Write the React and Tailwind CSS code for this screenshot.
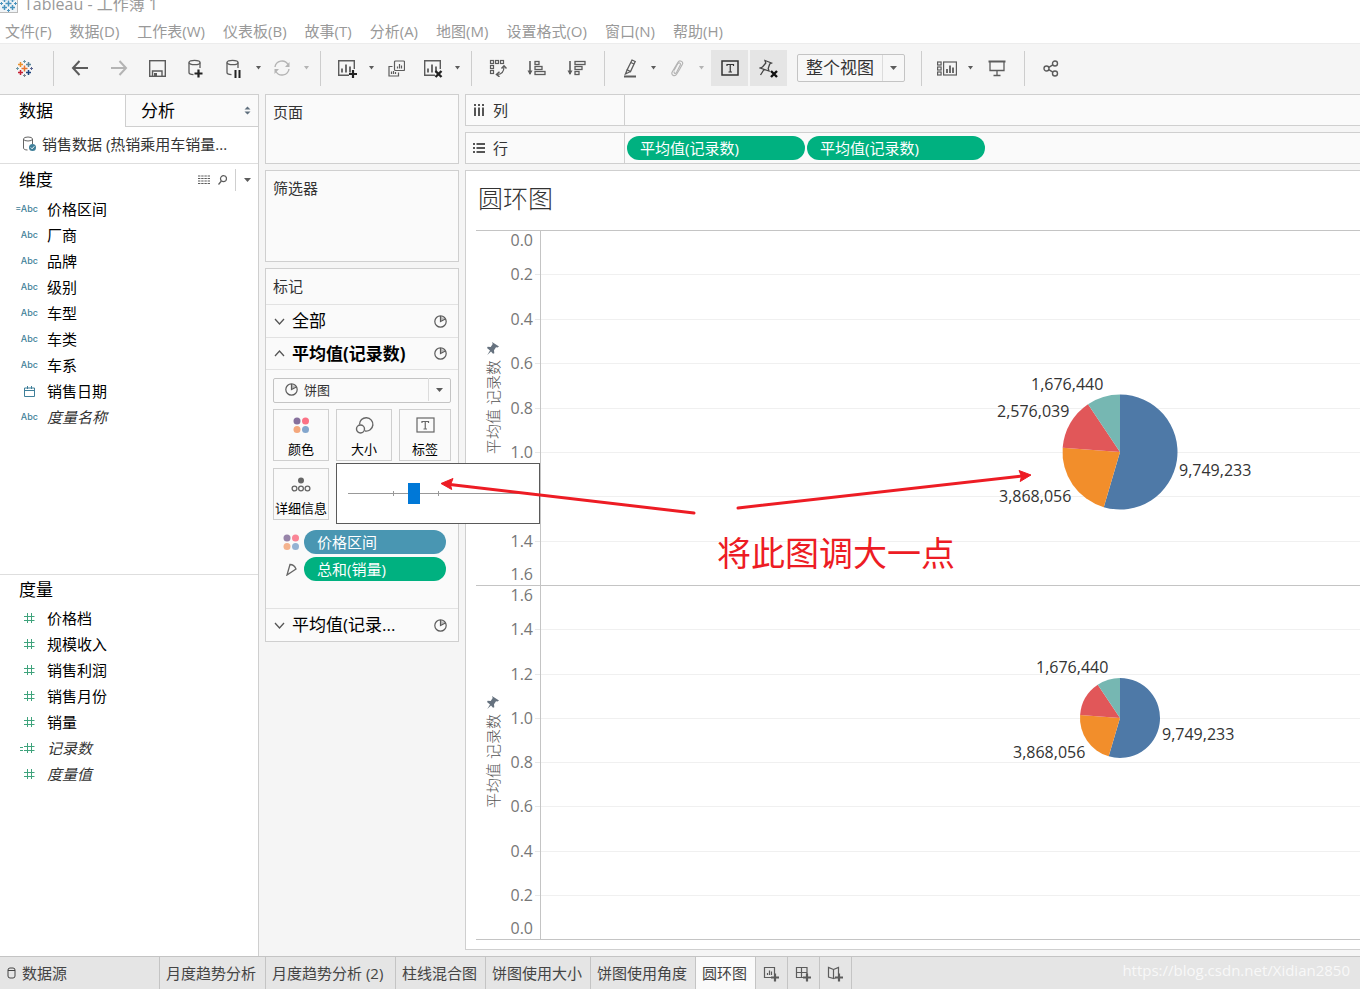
import React, { useState } from 'react';

const DIMENSIONS = [
  { name: '价格区间', type: 'calc' },
  { name: '厂商', type: 'text' },
  { name: '品牌', type: 'text' },
  { name: '级别', type: 'text' },
  { name: '车型', type: 'text' },
  { name: '车类', type: 'text' },
  { name: '车系', type: 'text' },
  { name: '销售日期', type: 'date' },
  { name: '度量名称', type: 'text', italic: true },
];

const MEASURES = [
  { name: '价格档', type: 'number' },
  { name: '规模收入', type: 'number' },
  { name: '销售利润', type: 'number' },
  { name: '销售月份', type: 'number' },
  { name: '销量', type: 'number' },
  { name: '记录数', type: 'calcNumber', italic: true },
  { name: '度量值', type: 'number', italic: true },
];

const MENUS = ['文件(F)', '数据(D)', '工作表(W)', '仪表板(B)', '故事(T)', '分析(A)', '地图(M)', '设置格式(O)', '窗口(N)', '帮助(H)'];

const SHEETS = [
  { name: '月度趋势分析', width: 'min-w-[106px]' },
  { name: '月度趋势分析 (2)', width: 'min-w-[130px]' },
  { name: '柱线混合图', width: 'min-w-[90px]' },
  { name: '饼图使用大小', width: 'min-w-[105px]' },
  { name: '饼图使用角度', width: 'min-w-[105px]' },
  { name: '圆环图', width: 'min-w-[60px]', active: true },
];

const SLICES = [
  { value: 9749233, color: '#4e79a7' },
  { value: 3868056, color: '#f28e2b' },
  { value: 2576039, color: '#e15759' },
  { value: 1676440, color: '#76b7b2' },
];

/* ---------- icons ---------- */

const Svg = ({ w = 18, h = 18, sw = 1, className = '', children }) => (
  <svg
    width={w}
    height={h}
    viewBox={`0 0 ${w} ${h}`}
    fill="none"
    stroke="currentColor"
    strokeWidth={sw}
    className={`block shrink-0 ${className}`}
    aria-hidden="true"
  >
    {children}
  </svg>
);

const plus = (x, y, r) => `M${x - r} ${y}h${r * 2}M${x} ${y - r}v${r * 2}`;

const LogoIcon = ({ mono }) => (
  <Svg w={17} h={17} sw={1.5}>
    <path d={plus(8.5, 8.5, 3)} stroke={mono || '#e8762d'} />
    <path d={plus(4.5, 4.5, 2.5)} stroke={mono || '#eb912c'} />
    <path d={plus(12.5, 4.5, 2.5)} stroke={mono || '#59879b'} />
    <path d={plus(4.5, 12.5, 2.5)} stroke={mono || '#c72035'} />
    <path d={plus(12.5, 12.5, 2.5)} stroke={mono || '#1f447e'} />
    <g strokeWidth="1">
      <path d={plus(8.5, 1.5, 1.5)} stroke={mono || '#7099a6'} />
      <path d={plus(8.5, 15.5, 1.5)} stroke={mono || '#7b848f'} />
      <path d={plus(1.5, 8.5, 1.5)} stroke={mono || '#7099a6'} />
      <path d={plus(15.5, 8.5, 1.5)} stroke={mono || '#5c6692'} />
    </g>
  </Svg>
);

const ArrowIcon = ({ flip }) => (
  <Svg w={18} h={16} sw={2} className={flip ? 'rotate-180' : ''}>
    <path d="M8.5 1L2 8l6.5 7M2 8h15" />
  </Svg>
);

const SaveIcon = () => (
  <Svg w={17} h={17} sw={1.4}>
    <rect x="0.7" y="0.7" width="15.6" height="15.6" />
    <path d="M3.5 16v-5h9.5v5" />
    <rect x="5" y="13" width="3" height="3" fill="currentColor" stroke="none" />
  </Svg>
);

const DbIcon = ({ pause }) => (
  <Svg w={18} h={19} sw={1.3}>
    <ellipse cx="7.5" cy="3.5" rx="5.5" ry="2.2" />
    <path d="M2 3.5v10c0 1.3 1.7 2 4.5 2.1M13 3.5V9" />
    {pause ? (
      <path d="M10.5 11v8M14.5 11v8" stroke="#222" strokeWidth="2" />
    ) : (
      <path d="M7.5 14.5h8M11.5 10.5v8" stroke="#222" strokeWidth="2.2" />
    )}
  </Svg>
);

const RefreshIcon = () => (
  <Svg w={18} h={18} sw={1.4}>
    <path d="M2 8a7 7 0 0 1 13-2.5M16 10a7 7 0 0 1-13 2.5" />
    <path d="M16.5 3v5h-4.5zM1.5 15v-5h4.5z" fill="currentColor" stroke="none" />
  </Svg>
);

const SheetIcon = ({ clear }) => (
  <Svg w={21} h={19} sw={1.4}>
    <path d="M12 16.3H1.7V1.7h15.6V10" />
    <path d="M5 13.5v-4M9 13.5v-8M13 13.5v-6" strokeWidth="1.8" />
    {clear ? (
      <path d="M12.5 12l6 6M18.5 12l-6 6" stroke="#222" strokeWidth="2.4" />
    ) : (
      <path d="M12 15h8M16 11v8" stroke="#222" strokeWidth="2.2" />
    )}
  </Svg>
);

const DuplicateIcon = () => (
  <Svg w={17} h={17} sw={1.2}>
    <rect x="6.5" y="1" width="10" height="9.5" rx="1" />
    <path d="M4.5 6.5h-3.5v9.5h9.5v-3.5" />
    <path d="M9.5 8.5v-2M11.5 8.5v-4.5M13.5 8.5v-3M3.5 14v-2.5M5.5 14v-3M7.5 14v-2" />
  </Svg>
);

const SwapIcon = () => (
  <Svg w={18} h={18} sw={1.2}>
    <rect x="1.5" y="1.5" width="3" height="3" />
    <rect x="6.5" y="1.5" width="3" height="3" />
    <rect x="11.5" y="1.5" width="3" height="3" />
    <rect x="1.5" y="6.5" width="3" height="3" />
    <rect x="1.5" y="11.5" width="3" height="3" />
    <path d="M8 15.5c4 0 7-2.5 7-8" />
    <path d="M10.5 12.8L7.5 15.5l3 2.3M12.5 9.5L15 6.8l2.5 2.7" strokeWidth="1.5" />
  </Svg>
);

const SortIcon = ({ desc }) => (
  <Svg w={19} h={16} sw={1.3}>
    <path d="M3 1v13" strokeWidth="1.6" />
    <path d="M0.5 10.5h5L3 15z" fill="currentColor" stroke="none" />
    <rect x="8" y="1.5" width={desc ? 10 : 4} height="3" />
    <rect x="8" y="6.5" width="7" height="3" />
    <rect x="8" y="11.5" width={desc ? 4 : 10} height="3" />
  </Svg>
);

const PenIcon = () => (
  <Svg w={14} h={19} sw={1.3}>
    <path d="M9 1l3.2 1.5L7.500 12.500l-3.300-1.700z" />
    <path d="M4.200 10.800L2.500 15l5-2.500M7.800 3.500l3.200 1.500" />
    <path d="M1 17.5h12" strokeWidth="2" />
  </Svg>
);

const ClipIcon = () => (
  <Svg w={14} h={17} sw={1.2}>
    <path d="M4 10.5l3.5-6.5c1.3-2.1 3.6-1 2.8 1L6.5 12.500c-1 1.800-3 .8-2.200-1" />
    <path d="M9.500 9.500l3-5.500c1-2.500-3-4.300-4.500-1.800L2.200 12c-1.600 3.300 2.800 5 4.500 2l2.800-4.500" />
  </Svg>
);

const LabelIcon = ({ small }) => (
  <Svg w={small ? 19 : 18} h={17} sw={small ? 1.2 : 1.5}>
    <rect x="1" y="1" width={small ? 17 : 16} height="14" />
    <path d="M6 6V4.500h6.500V6M9.250 4.500v7.500M7.500 12h3.500" strokeWidth="1.2" />
  </Svg>
);

const PinClearIcon = () => (
  <Svg w={20} h={19} sw={1.3}>
    <path d="M6 1.500l6.500 2.500-1.800 1-1.500 4.500.8 2.500L1 9l2.500-1L6.800 4zM5 10.500L1.500 16" />
    <path d="M12 12l6 6M18 12l-6 6" stroke="#111" strokeWidth="2.4" />
  </Svg>
);

const ShowMeIcon = () => (
  <Svg w={20} h={15} sw={1.2}>
    <rect x="0.6" y="1" width="3.5" height="3" />
    <rect x="0.6" y="6" width="3.5" height="3" />
    <rect x="0.6" y="11" width="3.5" height="3" />
    <rect x="6.6" y="1" width="12.8" height="13" />
    <path d="M10 12v-4M13 12v-7.5M16 12v-5.5" strokeWidth="1.8" />
  </Svg>
);

const PresentIcon = () => (
  <Svg w={18} h={17} sw={1.3}>
    <path d="M0.5 1.5h17" strokeWidth="2" />
    <path d="M2 2v8.5h14V2M9 10.5v5M5.5 15.5h7" />
  </Svg>
);

const ShareIcon = () => (
  <Svg w={16} h={17} sw={1.4}>
    <circle cx="3.5" cy="8.5" r="2.5" />
    <circle cx="12" cy="3.5" r="2.5" />
    <circle cx="12" cy="13.5" r="2.5" />
    <path d="M5.8 7.3l4-2.5M5.8 9.700l4 2.500" />
  </Svg>
);

const PieIcon = () => (
  <Svg w={13} h={13} sw={1.2}>
    <circle cx="6.5" cy="6.5" r="5.7" />
    <path d="M6.5 1v5.5l4.8-2.5" />
    <path d="M7 1.5l3.500 2.200L7 5.800z" fill="currentColor" fillOpacity="0.4" stroke="none" />
  </Svg>
);

const ColorDots = () => (
  <Svg w={17} h={17}>
    <g stroke="none">
      <circle cx="4" cy="4" r="3.5" fill="#86709c" />
      <circle cx="12.500" cy="4" r="3.5" fill="#fb7185" />
      <circle cx="4" cy="12.500" r="3.5" fill="#f4a77c" />
      <circle cx="12.500" cy="12.500" r="3.5" fill="#83a6cd" />
    </g>
  </Svg>
);

const SizeIcon = () => (
  <Svg w={19} h={18} sw={1.4}>
    <path d="M4.500 8.500a6.700 6.700 0 1 1 5.500 6.500" />
    <circle cx="5.5" cy="13" r="4" />
  </Svg>
);

const DetailIcon = () => (
  <Svg w={20} h={15} sw={1.3}>
    <circle cx="10" cy="3.5" r="3" fill="currentColor" stroke="none" />
    <circle cx="3.500" cy="11.5" r="2.4" />
    <circle cx="10" cy="11.5" r="2.4" />
    <circle cx="16.500" cy="11.5" r="2.4" />
  </Svg>
);

const AngleIcon = () => (
  <Svg w={11} h={13} sw={1.3}>
    <path d="M4 1.5L1 12l9-6C9 3.500 6.500 1.500 4 1.500z" />
  </Svg>
);

const Chevron = ({ up }) => (
  <Svg w={11} h={7} sw={1.3}>
    <path d={up ? 'M1 6l4.500-5L10 6' : 'M1 1l4.500 5L10 1'} />
  </Svg>
);

const Caret = ({ big }) => (
  <Svg w={7} h={4}>
    <path d={big ? 'M0 0h7L3.500 4z' : 'M1 0h5L3.500 3.500z'} fill="currentColor" stroke="none" />
  </Svg>
);

const TypeIcon = ({ type }) => {
  if (type === 'date') {
    return (
      <Svg w={11} h={11} className="text-[#3f7f99]">
        <path d="M0.5 2h10v8.5h-10zM0.5 4.5h10M3.5 0v3M7.500 0v3" />
      </Svg>
    );
  }
  if (type === 'number' || type === 'calcNumber') {
    return (
      <span className="flex items-center text-[#3fa37c]">
        {type === 'calcNumber' && (
          <Svg w={4} h={11} className="-ml-1">
            <path d="M0 4.5h3M0 7.5h3" />
          </Svg>
        )}
        <Svg w={11} h={11}>
          <path d="M3.5 0v10M7.5 0v10M0 3.5h10.500M0 7.500h10.500" />
        </Svg>
      </span>
    );
  }
  return (
    <span className="font-['Inter',sans-serif] text-[9px] font-medium text-[#3f7f99]">
      {type === 'calc' ? '=Abc' : 'Abc'}
    </span>
  );
};

/* ---------- toolbar ---------- */

const Tool = ({ label, className = 'w-9', children }) => (
  <button type="button" aria-label={label} className={`flex h-9 shrink-0 items-center justify-center ${className}`}>
    {children}
  </button>
);

const Drop = ({ label, off }) => (
  <Tool label={label} className={off ? 'w-3 text-[#b4b4b4]' : 'w-3'}>
    <Caret />
  </Tool>
);

const Sep = ({ className = 'mx-2' }) => <span className={`h-[35px] w-px shrink-0 bg-[#cdcdcd] ${className}`} />;

const Toolbar = () => (
  <div className="flex h-[51px] shrink-0 items-center border-t border-[#ececec] bg-[#f5f5f5] pb-0.5 pl-[5px] text-[#5c5c5c]">
    <Tool label="起始页" className="w-[38px]"><LogoIcon /></Tool>
    <Sep className="mr-1.5 ml-2.5" />
    <Tool label="撤消" className="w-[39px]"><ArrowIcon /></Tool>
    <Tool label="重做" className="w-[39px] text-[#b4b4b4]"><ArrowIcon flip /></Tool>
    <Tool label="保存" className="w-[39px]"><SaveIcon /></Tool>
    <Tool label="新建数据源" className="w-[38px]"><DbIcon /></Tool>
    <Tool label="暂停自动更新" className="w-[37px]"><DbIcon pause /></Tool>
    <Drop label="自动更新选项" />
    <Tool label="运行更新" className="w-9 text-[#b4b4b4]"><RefreshIcon /></Tool>
    <Drop label="运行选项" off />
    <Sep />
    <Tool label="新建工作表"><SheetIcon /></Tool>
    <Drop label="新建选项" />
    <Tool label="复制工作表" className="w-[38px]"><DuplicateIcon /></Tool>
    <Tool label="清除工作表"><SheetIcon clear /></Tool>
    <Drop label="清除选项" />
    <Sep />
    <Tool label="交换行和列"><SwapIcon /></Tool>
    <Tool label="升序排序" className="w-[41px]"><SortIcon /></Tool>
    <Tool label="降序排序" className="w-[39px]"><SortIcon desc /></Tool>
    <Sep />
    <Tool label="突出显示" className="w-[34px]"><PenIcon /></Tool>
    <Drop label="突出显示选项" />
    <Tool label="组成员" className="w-9 text-[#b4b4b4]"><ClipIcon /></Tool>
    <Drop label="组选项" off />
    <Tool label="显示标记标签" className="mr-0.5 ml-1 w-[37px] bg-[#e5e5e5] text-[#333]"><LabelIcon /></Tool>
    <Tool label="固定轴" className="mr-2.5 w-[37px] bg-[#e5e5e5] text-[#444]"><PinClearIcon /></Tool>
    <div className="relative h-7 w-[108px] shrink-0">
      <select aria-label="适合" className="h-full w-full appearance-none rounded-xs border border-[#c4c4c4] bg-[#f7f7f7] pl-2 text-[17px] text-[#333]">
        <option>整个视图</option>
      </select>
      <span className="pointer-events-none absolute inset-y-px right-px flex w-[22px] items-center justify-center border-l border-[#dcdcdc]">
        <Caret big />
      </span>
    </div>
    <Sep className="mr-2 ml-4" />
    <Tool label="智能推荐" className="w-[34px]"><ShowMeIcon /></Tool>
    <Drop label="智能推荐选项" />
    <Tool label="演示模式" className="w-[42px]"><PresentIcon /></Tool>
    <Sep className="mx-1.5" />
    <Tool label="共享" className="w-10"><ShareIcon /></Tool>
  </div>
);

/* ---------- data pane ---------- */

const FieldList = ({ fields }) => (
  <ul>
    {fields.map((f) => (
      <li key={f.name} className="flex h-[26px] items-center">
        <span className={`flex w-[38px] shrink-0 justify-end ${f.type === 'calcNumber' || f.type === 'number' || f.type === 'date' ? 'pr-[3px]' : ''}`}>
          <TypeIcon type={f.type} />
        </span>
        <span className={`ml-[9px] text-[15px] ${f.italic ? 'text-[#333] italic' : 'text-black'}`}>{f.name}</span>
      </li>
    ))}
  </ul>
);

const DataPane = () => (
  <aside className="flex w-[259px] shrink-0 flex-col border-t border-r border-[#cfcfcf] bg-white">
    <div className="flex h-8 shrink-0 text-[17px] text-black">
      <button type="button" className="w-[125px] pl-[19px] text-left">数据</button>
      <button type="button" className="flex flex-1 items-center justify-between border-b border-l border-[#cfcfcf] bg-[#fafafa] pr-[7px] pl-[15px]">
        分析
        <Svg w={7} h={9} className="text-[#5f6f7d]">
          <path d="M3.500 0.500l3 3h-6zM3.500 8.500l3-3h-6z" fill="currentColor" stroke="none" />
        </Svg>
      </button>
    </div>
    <button type="button" className="flex h-[37px] shrink-0 items-center border-b border-[#dedede] pb-0.5 pl-[22px] text-[15px] text-[#333]">
      <Svg w={15} h={16} className="mr-[5px] text-[#666]">
        <ellipse cx="6" cy="3" rx="4.500" ry="2" />
        <path d="M1.500 3v9c0 1.200 1.500 2 4 2M10.500 3v5" />
        <circle cx="10.500" cy="11.500" r="3.500" fill="#3f7f99" stroke="none" />
        <path d="M8.800 11.500l1.300 1.300 2.200-2.500" stroke="#fff" />
      </Svg>
      销售数据 (热销乘用车销量...
    </button>
    <section className="min-h-0 shrink-0 basis-[411px] border-b border-[#dedede]">
      <div className="flex h-8 items-center pl-[19px] text-[#5c5c5c]">
        <h2 className="flex-1 text-[17px] text-black">维度</h2>
        <button type="button" aria-label="查看数据" className="mr-2">
          <Svg w={12} h={10}>
            <path d="M0 1h12M0 3.500h12M0 6h12M0 8.500h12" strokeWidth="1.200" strokeDasharray="2.400 0.800" />
          </Svg>
        </button>
        <button type="button" aria-label="查找字段" className="mr-2">
          <Svg w={9} h={10} sw={1.200}>
            <circle cx="5.500" cy="3.700" r="3" />
            <path d="M3.400 6L0.500 9.500" />
          </Svg>
        </button>
        <button type="button" aria-label="维度菜单" className="flex h-[22px] w-[23px] items-center justify-center border-l border-[#cfcfcf]">
          <Caret big />
        </button>
      </div>
      <FieldList fields={DIMENSIONS} />
    </section>
    <section className="min-h-0 flex-1">
      <h2 className="flex h-[30px] items-center pl-[19px] text-[17px] text-black">度量</h2>
      <FieldList fields={MEASURES} />
    </section>
  </aside>
);

/* ---------- cards ---------- */

const CARD = 'border border-[#cfcfcf] bg-[#fafafa]';

const MarkButton = ({ label, icon, className = 'w-14' }) => (
  <button
    type="button"
    className={`flex h-[52px] shrink-0 flex-col items-center justify-between border border-[#cfcfcf] bg-[#fafafa] text-[13px] whitespace-nowrap text-black ${className}`}
  >
    <span className="flex h-8 items-center text-[#666]">{icon}</span>
    <span className="h-5 leading-4">{label}</span>
  </button>
);

const MarkRow = ({ label, open, className = '' }) => (
  <button type="button" className={`flex w-full items-center border-[#e2e2e2] pr-[11px] pl-2 text-[17px] text-black ${className}`}>
    <span className="mr-[7px] text-[#555]"><Chevron up={open} /></span>
    <span className="flex-1 text-left">{label}</span>
    <span className="text-[#5c5c5c]"><PieIcon /></span>
  </button>
);

const MarksCard = () => {
  const [size, setSize] = useState(10);
  return (
    <section className={`relative ${CARD}`}>
      <h3 className="flex h-9 items-center border-b border-[#e2e2e2] pl-[7px] text-[15px] text-[#333]">标记</h3>
      <MarkRow label="全部" className="h-[33px] border-b" />
      <MarkRow label="平均值(记录数)" open className="h-8 border-b font-bold" />
      <div className="px-[7px] pt-[7px] pb-[27px]">
        <div className="relative h-[25px]">
          <select aria-label="标记类型" className="h-full w-full appearance-none rounded-xs border border-[#c4c4c4] bg-[#fafafa] pl-[30px] text-[13px] text-[#333]">
            <option>饼图</option>
          </select>
          <span className="pointer-events-none absolute inset-y-0 left-3 flex items-center text-[#5c5c5c]"><PieIcon /></span>
          <span className="pointer-events-none absolute inset-y-px right-px flex w-[22px] items-center justify-center border-l border-[#dcdcdc] text-[#5c5c5c]"><Caret big /></span>
        </div>
        <div className="mt-[7px] flex flex-wrap gap-[7px]">
          <MarkButton label="颜色" icon={<ColorDots />} />
          <MarkButton label="大小" icon={<SizeIcon />} />
          <MarkButton label="标签" icon={<LabelIcon small />} className="w-[52px]" />
          <MarkButton label="详细信息" icon={<DetailIcon />} />
        </div>
        <div className="mt-2.5 flex flex-col gap-[3px] pr-[5px] pl-2.5 text-[15px] text-white">
          <div className="flex items-center">
            <span className="flex w-[21px] shrink-0 opacity-85"><ColorDots /></span>
            <span className="h-6 flex-1 rounded-full bg-[#4996b2] pl-[13px] leading-6">价格区间</span>
          </div>
          <div className="flex items-center">
            <span className="flex w-[21px] shrink-0 pl-[3px] text-[#666]"><AngleIcon /></span>
            <span className="h-6 flex-1 rounded-full bg-[#00b180] pl-[13px] leading-6">总和(销量)</span>
          </div>
        </div>
      </div>
      <MarkRow label="平均值(记录..." className="h-[33px] border-t" />

      {/* size slider popup */}
      <div className="absolute top-[194px] left-[70px] z-10 flex h-[61px] w-[204px] items-center border border-[#5a5a5a] bg-white px-[11px]">
        <div className="relative flex w-full items-center">
          <span className="absolute left-0 h-px w-full bg-[#999]" />
          <span className="absolute left-1/4 h-[5px] w-px bg-[#999]" />
          <span className="absolute left-1/2 h-[5px] w-px bg-[#999]" />
          <input
            type="range"
            aria-label="大小"
            min="0"
            max="28"
            value={size}
            onChange={(e) => setSize(Number(e.target.value))}
            className="relative h-[21px] w-full appearance-none bg-transparent [&::-webkit-slider-thumb]:h-[21px] [&::-webkit-slider-thumb]:w-3 [&::-webkit-slider-thumb]:appearance-none [&::-webkit-slider-thumb]:bg-[#0078d7]"
          />
        </div>
      </div>
    </section>
  );
};

/* ---------- shelves ---------- */

const Shelf = ({ label, icon, pills = [] }) => (
  <div className={`flex h-8 shrink-0 border-r-0 ${CARD}`}>
    <div className="flex w-[159px] shrink-0 items-center border-r border-[#cfcfcf] pl-[7px] text-[15px] text-[#333]">
      <span className="mr-2 flex w-3 text-[#555]">{icon}</span>
      {label}
    </div>
    <div className="flex items-center gap-0.5 pl-0.5">
      {pills.map((p, i) => (
        <span key={i} className="h-6 w-[178px] rounded-full bg-[#00b180] pl-[13px] text-[15px] leading-6 text-white">{p}</span>
      ))}
    </div>
  </div>
);

/* ---------- chart ---------- */

const slicePath = (cx, cy, r, from, to) => {
  const pt = (t) => `${cx + r * Math.sin(t * 2 * Math.PI)} ${cy - r * Math.cos(t * 2 * Math.PI)}`;
  return `M${cx} ${cy}L${pt(from)}A${r} ${r} 0 ${to - from > 0.5 ? 1 : 0} 1 ${pt(to)}Z`;
};

const Pie = ({ cx, cy, r }) => {
  const total = SLICES.reduce((s, d) => s + d.value, 0);
  let acc = 0;
  return SLICES.map((d) => {
    const from = acc / total;
    acc += d.value;
    return <path key={d.color} d={slicePath(cx, cy, r, from, acc / total)} fill={d.color} />;
  });
};

const TICKS_TOP = [['0.0', 10], ['0.2', 44], ['0.4', 89], ['0.6', 133], ['0.8', 178], ['1.0', 222], ['1.2', 266], ['1.4', 311], ['1.6', 344]];
const TICKS_BOTTOM = [['1.6', 365], ['1.4', 399], ['1.2', 444], ['1.0', 488], ['0.8', 532], ['0.6', 576], ['0.4', 621], ['0.2', 665], ['0.0', 698]];

const LABELS = [
  ['1,676,440', 555, 154],
  ['2,576,039', 521, 181],
  ['9,749,233', 703, 240],
  ['3,868,056', 523, 266],
  ['1,676,440', 560, 437],
  ['9,749,233', 686, 504],
  ['3,868,056', 537, 522],
];

const AxisTitle = ({ y }) => (
  <g>
    <text transform={`translate(17 ${y}) rotate(-90)`} textAnchor="middle" dominantBaseline="central" fontSize="15" fill="#555" className="font-light">
      平均值 记录数
    </text>
    <path
      transform={`translate(11 ${y - 65})`}
      d="M5 0l7 4.500-1.500 1-1.500-.2-2 3 .3 3-1.300.5L4 9.500.3 13 3 8.500 0 6l.7-1.200 3 .1 2-3z"
      fill="#66727f"
    />
  </g>
);

const Chart = () => (
  <svg className="block h-[710px] w-full" role="img" aria-label="圆环图">
    {[TICKS_TOP, TICKS_BOTTOM].map((ticks) =>
      ticks.map(([label, y], i) => (
        <g key={label + y}>
          {i > 0 && i < ticks.length - 1 && (
            <>
              <line x1="59" x2="64" y1={y + 0.5} y2={y + 0.5} stroke="#e8e8e8" />
              <line x1="65" x2="100%" y1={y + 0.5} y2={y + 0.5} stroke="#f0f0f0" />
            </>
          )}
          <text x="57" y={y + 6} textAnchor="end" fontSize="16" fill="#777">{label}</text>
        </g>
      ))
    )}
    <path d="M64.500 0v710" stroke="#c4c4c4" />
    <line x1="0" x2="100%" y1="0.500" y2="0.500" stroke="#c4c4c4" />
    <line x1="0" x2="100%" y1="355.500" y2="355.500" stroke="#c4c4c4" />
    <line x1="0" x2="100%" y1="709.500" y2="709.500" stroke="#c4c4c4" />
    <AxisTitle y={177} />
    <AxisTitle y={531} />
    <Pie cx={644} cy={222} r={57.5} />
    <Pie cx={644} cy={488} r={40} />
    {LABELS.map(([text, x, y]) => (
      <text key={text + y} x={x} y={y + 6} fontSize="16" fill="#333">{text}</text>
    ))}
  </svg>
);

/* red arrows and note drawn over the workspace */
const Annotations = () => (
  <div className="pointer-events-none absolute inset-0 z-20 text-[#ed1c24]">
    <svg className="absolute inset-0 h-full w-full" fill="currentColor" stroke="currentColor" aria-hidden="true">
      <path d="M694 419L450 390.500M738 414L1022 382" strokeWidth="3" strokeLinecap="round" fill="none" />
      <path d="M441 389.500l12-5-2.500 6.200 1.200 4.800zM1031 381l-12-4.500 2.500 5.700-1.300 5.300z" strokeWidth="1" />
    </svg>
    <p className="absolute top-[434px] left-[717px] text-[34px] leading-[50px] whitespace-nowrap">将此图调大一点</p>
  </div>
);

/* ---------- sheet tabs ---------- */

const SheetTabs = () => (
  <footer className="relative flex h-[33px] shrink-0 border-t border-[#c4c4c4] bg-[#e5e5e5] text-[15px] text-[#444]">
    <button type="button" className="flex w-40 shrink-0 items-center border-r border-[#c4c4c4] pl-[7px]">
      <Svg w={9} h={12} className="mr-1.5">
        <rect x="1" y="1" width="7" height="10" rx="2" />
        <path d="M1 3.500h7" />
      </Svg>
      数据源
    </button>
    {SHEETS.map((s) => (
      <button
        key={s.name}
        type="button"
        className={`shrink-0 border-r border-[#c4c4c4] px-1.5 text-left ${s.width} ${s.active ? 'bg-[#fafafa]' : ''}`}
      >
        {s.name}
      </button>
    ))}
    {[
      ['新建工作表', 'M8 11.500H1.500v-10h10V8M4.500 9V7M6.500 9V4.500M8.500 9V5.500'],
      ['新建仪表板', 'M8 11.500H1.500v-10h10.500V8M6.500 1.500v10M1.500 6.500H12'],
      ['新建故事', 'M6.500 3.500L1.500 1.500v9.500l5 1.500zM6.500 3.500l5-2V8M6.500 12.500l2-.5'],
    ].map(([label, d]) => (
      <button key={label} type="button" aria-label={label} className="flex w-8 shrink-0 items-center justify-center border-r border-[#c4c4c4] pt-0.5 text-[#5c5c5c]">
        <Svg w={17} h={16} sw={1.2}>
          <path d={d} />
          <path d="M8 11.500h8M12 7.500v8" strokeWidth="2.200" />
        </Svg>
      </button>
    ))}
    <span className="absolute top-0 right-2.5 text-[15px] leading-[26px] text-white/75">https://blog.csdn.net/Xidian2850</span>
  </footer>
);

const App = () => {
  return (
    <div className="flex h-screen flex-col overflow-hidden bg-white font-['Open_Sans','Noto_Sans_CJK_SC',sans-serif]">
      <header className="h-5 shrink-0">
        <div className="-mt-2 flex h-6 items-center text-[16px] text-[#999]">
          <span className="mr-1.5 border-r border-b border-[#bbb] bg-[#f0f4f7]"><LogoIcon mono="#4a93bd" /></span>
          Tableau - 工作簿 1
        </div>
      </header>
      <nav className="flex h-[23px] shrink-0 items-center gap-[18px] pl-[5px] text-[15px] text-[#999]">
        {MENUS.map((m) => (
          <button key={m} type="button" className="whitespace-nowrap">{m}</button>
        ))}
      </nav>
      <Toolbar />
      <main className="relative flex min-h-0 flex-1 gap-1.5 bg-[#f5f5f5]">
        <DataPane />
        <div className="flex w-[194px] shrink-0 flex-col gap-1.5">
          <section className={`h-[70px] shrink-0 ${CARD}`}>
            <h3 className="pt-1.5 pl-[7px] text-[15px] text-[#333]">页面</h3>
          </section>
          <section className={`h-[92px] shrink-0 ${CARD}`}>
            <h3 className="pt-1.5 pl-[7px] text-[15px] text-[#333]">筛选器</h3>
          </section>
          <MarksCard />
        </div>
        <div className="flex min-w-0 flex-1 flex-col gap-1.5 pb-1.5">
          <Shelf
            label="列"
            icon={
              <Svg w={12} h={12} sw={2}>
                <path d="M2 0v2M6 0v2M10 0v2M2 3.500V12M6 3.500V12M10 3.500V12" />
              </Svg>
            }
          />
          <Shelf
            label="行"
            pills={['平均值(记录数)', '平均值(记录数)']}
            icon={
              <Svg w={12} h={12} sw={2}>
                <path d="M0 2h2M0 6h2M0 10h2M3.500 2H12M3.500 6H12M3.500 10H12" />
              </Svg>
            }
          />
          <section className="min-h-0 flex-1 overflow-hidden border border-r-0 border-[#cfcfcf] bg-white pl-2.5">
            <h1 className="flex h-[59px] items-center pb-1 pl-0.5 text-[25px] font-light text-[#333]">圆环图</h1>
            <Chart />
          </section>
        </div>
        <Annotations />
      </main>
      <SheetTabs />
    </div>
  );
};

export default App;
